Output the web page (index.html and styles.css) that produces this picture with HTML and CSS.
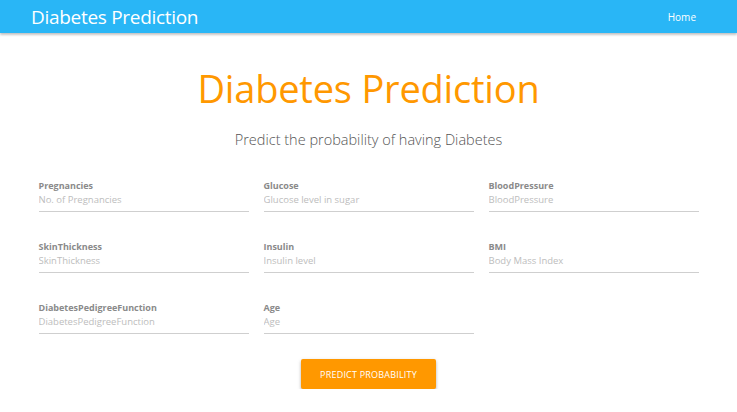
FILE: index.html
```html
<!DOCTYPE html>
<html>
<head>
<meta charset="utf-8">
<title>Diabetes Prediction</title>
<link rel="stylesheet" href="styles.css">
</head>
<body>
<nav class="navbar">
  <a class="brand" href="#">Diabetes Prediction</a>
  <a class="nav-link" href="#">Home</a>
</nav>
<main class="content">
  <h1 class="title">Diabetes Prediction</h1>
  <p class="subtitle">Predict the probability of having Diabetes</p>
  <form class="form">
    <div class="grid">
      <div class="field"><label>Pregnancies</label><input type="text" placeholder="No. of Pregnancies"></div>
      <div class="field"><label>Glucose</label><input type="text" placeholder="Glucose level in sugar"></div>
      <div class="field"><label>BloodPressure</label><input type="text" placeholder="BloodPressure"></div>
      <div class="field"><label>SkinThickness</label><input type="text" placeholder="SkinThickness"></div>
      <div class="field"><label>Insulin</label><input type="text" placeholder="Insulin level"></div>
      <div class="field"><label>BMI</label><input type="text" placeholder="Body Mass Index"></div>
      <div class="field"><label>DiabetesPedigreeFunction</label><input type="text" placeholder="DiabetesPedigreeFunction"></div>
      <div class="field"><label>Age</label><input type="text" placeholder="Age"></div>
    </div>
    <div class="actions">
      <button type="button" class="btn">Predict Probability</button>
    </div>
  </form>
</main>
</body>
</html>
```
FILE: styles.css
```css
* { box-sizing: border-box; }
html, body { margin: 0; padding: 0; background: #fff; }
body { font-family: "Open Sans", "Noto Sans", sans-serif; color: #555; }

.navbar {
  height: 33px;
  background: #29b6f6;
  display: flex;
  align-items: center;
  justify-content: space-between;
  padding: 0 41px 0 31px;
  box-shadow: 0 2px 2px rgba(0,0,0,0.16), 0 1px 3px rgba(0,0,0,0.12);
}
.brand { color: #fff; text-decoration: none; font-size: 19px; letter-spacing: -0.3px; }
.nav-link { color: #fff; text-decoration: none; font-size: 10px; }

.content { padding-top: 30px; }
.title {
  margin: 0;
  text-align: center;
  color: #ff9800;
  font-weight: 400;
  font-size: 38px;
  line-height: 50px;
  letter-spacing: -0.2px;
}
.subtitle {
  margin: 17px 0 0;
  text-align: center;
  font-size: 14.5px;
  line-height: 20px;
  color: #555;
  font-weight: 300;
}
.form { width: 660px; margin: 29px auto 0; }
.grid {
  display: grid;
  grid-template-columns: repeat(3, 210px);
  column-gap: 15px;
  row-gap: 28px;
}
.field { display: flex; flex-direction: column; }
.field label {
  font-size: 9px;
  font-weight: 700;
  color: #8a8a8a;
  line-height: 13px;
}
.field input {
  border: none;
  border-bottom: 1px solid #cfcfcf;
  padding: 0 0 5px;
  height: 20px;
  font-family: inherit;
  font-size: 9.5px;
  color: #555;
  outline: none;
  background: transparent;
}
.field input::placeholder { color: #bdbdbd; }

.actions { display: flex; justify-content: center; margin-top: 25px; }
.btn {
  width: 135px;
  height: 30px;
  background: #ff9800;
  color: #fff;
  border: none;
  border-radius: 2px;
  font-family: inherit;
  font-size: 9px;
  text-transform: uppercase;
  letter-spacing: 0.2px;
  box-shadow: 0 2px 3px rgba(0,0,0,0.2), 0 1px 4px rgba(0,0,0,0.12);
}
```
